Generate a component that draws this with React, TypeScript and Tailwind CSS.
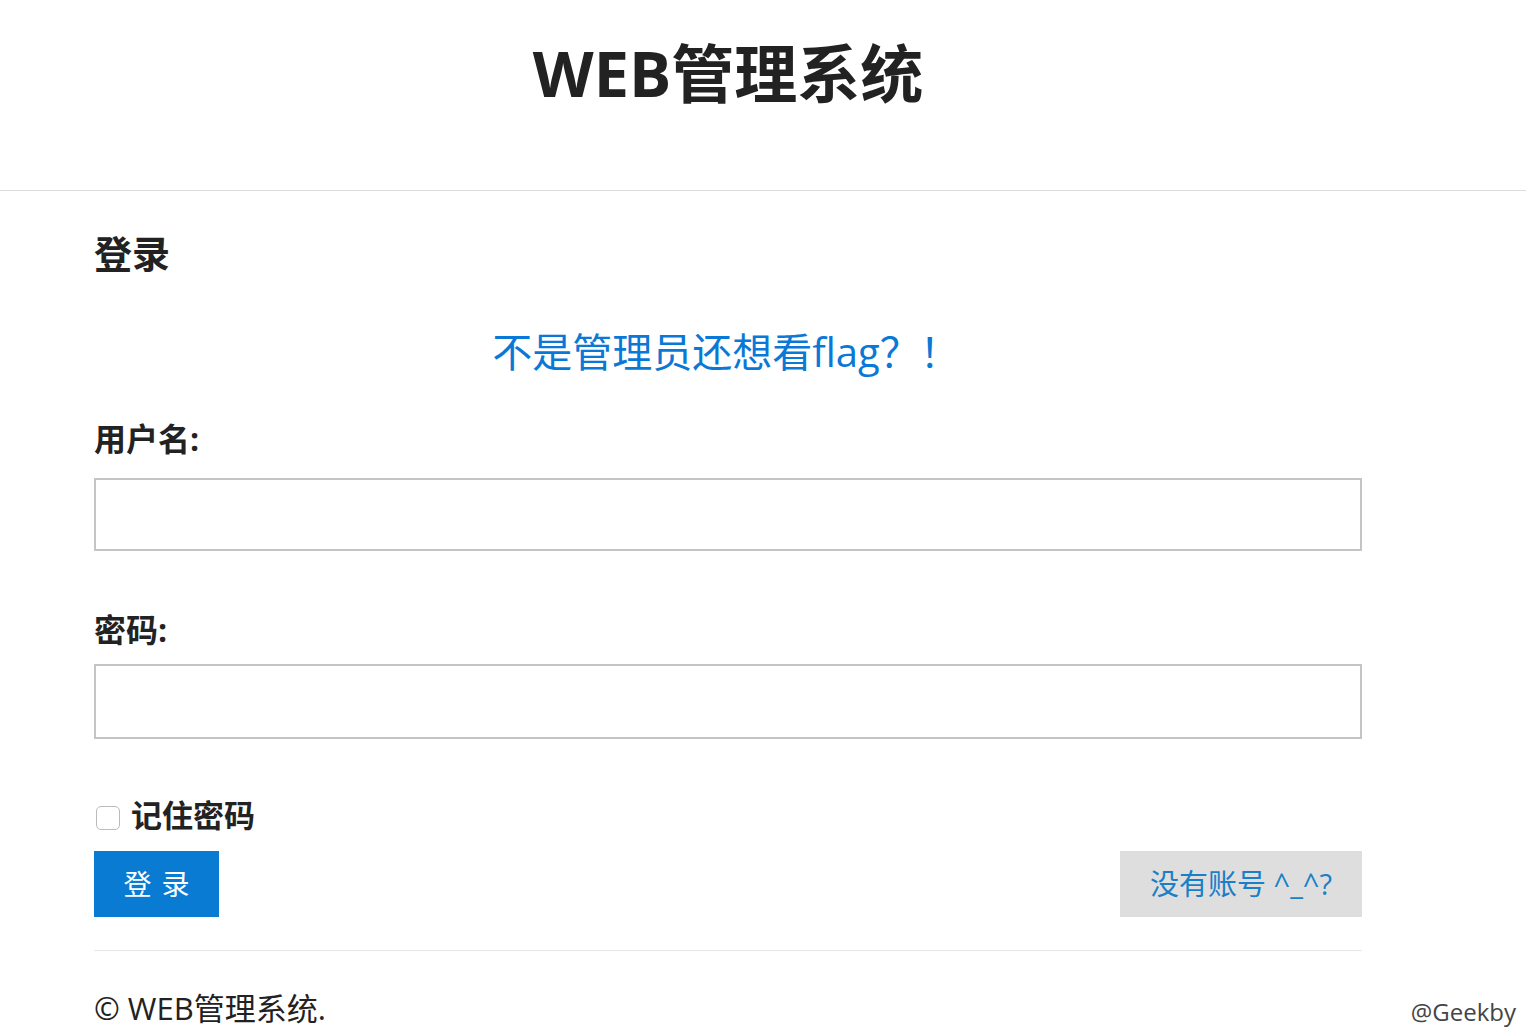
export default function App() {
  const font = { fontFamily: '"Open Sans", "Noto Sans CJK SC", sans-serif' };
  return (
    <div className="relative w-[1526px] h-[1034px] bg-white text-[#222] overflow-hidden" style={font}>
      <header className="h-[191px] border-b border-[#ddd] pt-[33px]">
        <div className="ml-[94px] w-[1268px] flex justify-center">
          <h1 className="text-[63px] leading-[80px] font-bold text-[#222]">WEB管理系统</h1>
        </div>
      </header>
      <main className="ml-[94px] w-[1268px]">
        <h2 className="mt-[37px] text-[38px] leading-[50px] font-bold text-[#222]">登录</h2>
        <p className="mt-[49px] text-center text-[40px] leading-[50px] text-[#0a78d6] pr-[4px]">不是管理员还想看flag？！</p>
        <label className="block mt-[42px] text-[32px] leading-[40px] font-bold text-[#222]">用户名:</label>
        <input className="block mt-[19px] w-[1268px] h-[73px] border-2 border-[#c4c4c4] bg-white" />
        <label className="block mt-[59px] text-[32px] leading-[40px] font-bold text-[#222]">密码:</label>
        <input type="password" className="block mt-[14px] w-[1268px] h-[75px] border-2 border-[#c4c4c4] bg-white" />
        <div className="mt-[56px] flex items-center gap-[11px]">
          <span className="w-[24px] h-[24px] rounded-[5px] border border-[#bbb] bg-white ml-[2px] mt-[6px]" />
          <span className="text-[31px] leading-[40px] font-bold text-[#222]">记住密码</span>
        </div>
        <div className="mt-[16px] flex justify-between">
          <button className="w-[125px] h-[66px] bg-[#0a7bd3] text-white text-[28px] tracking-[10px] pl-[10px]">登录</button>
          <button className="w-[242px] h-[66px] bg-[#dedede] text-[#1a7fc6] text-[29px]">没有账号 ^_^?</button>
        </div>
        <div className="mt-[33px] border-t border-[#e6e6e6]" />
        <p className="mt-[37px] text-[31px] leading-[40px] text-[#222]">© WEB管理系统.</p>
      </main>
      <div className="absolute right-[10px] bottom-[6px] text-[24px] leading-[32px] text-[#444]">@Geekby</div>
    </div>
  );
}
